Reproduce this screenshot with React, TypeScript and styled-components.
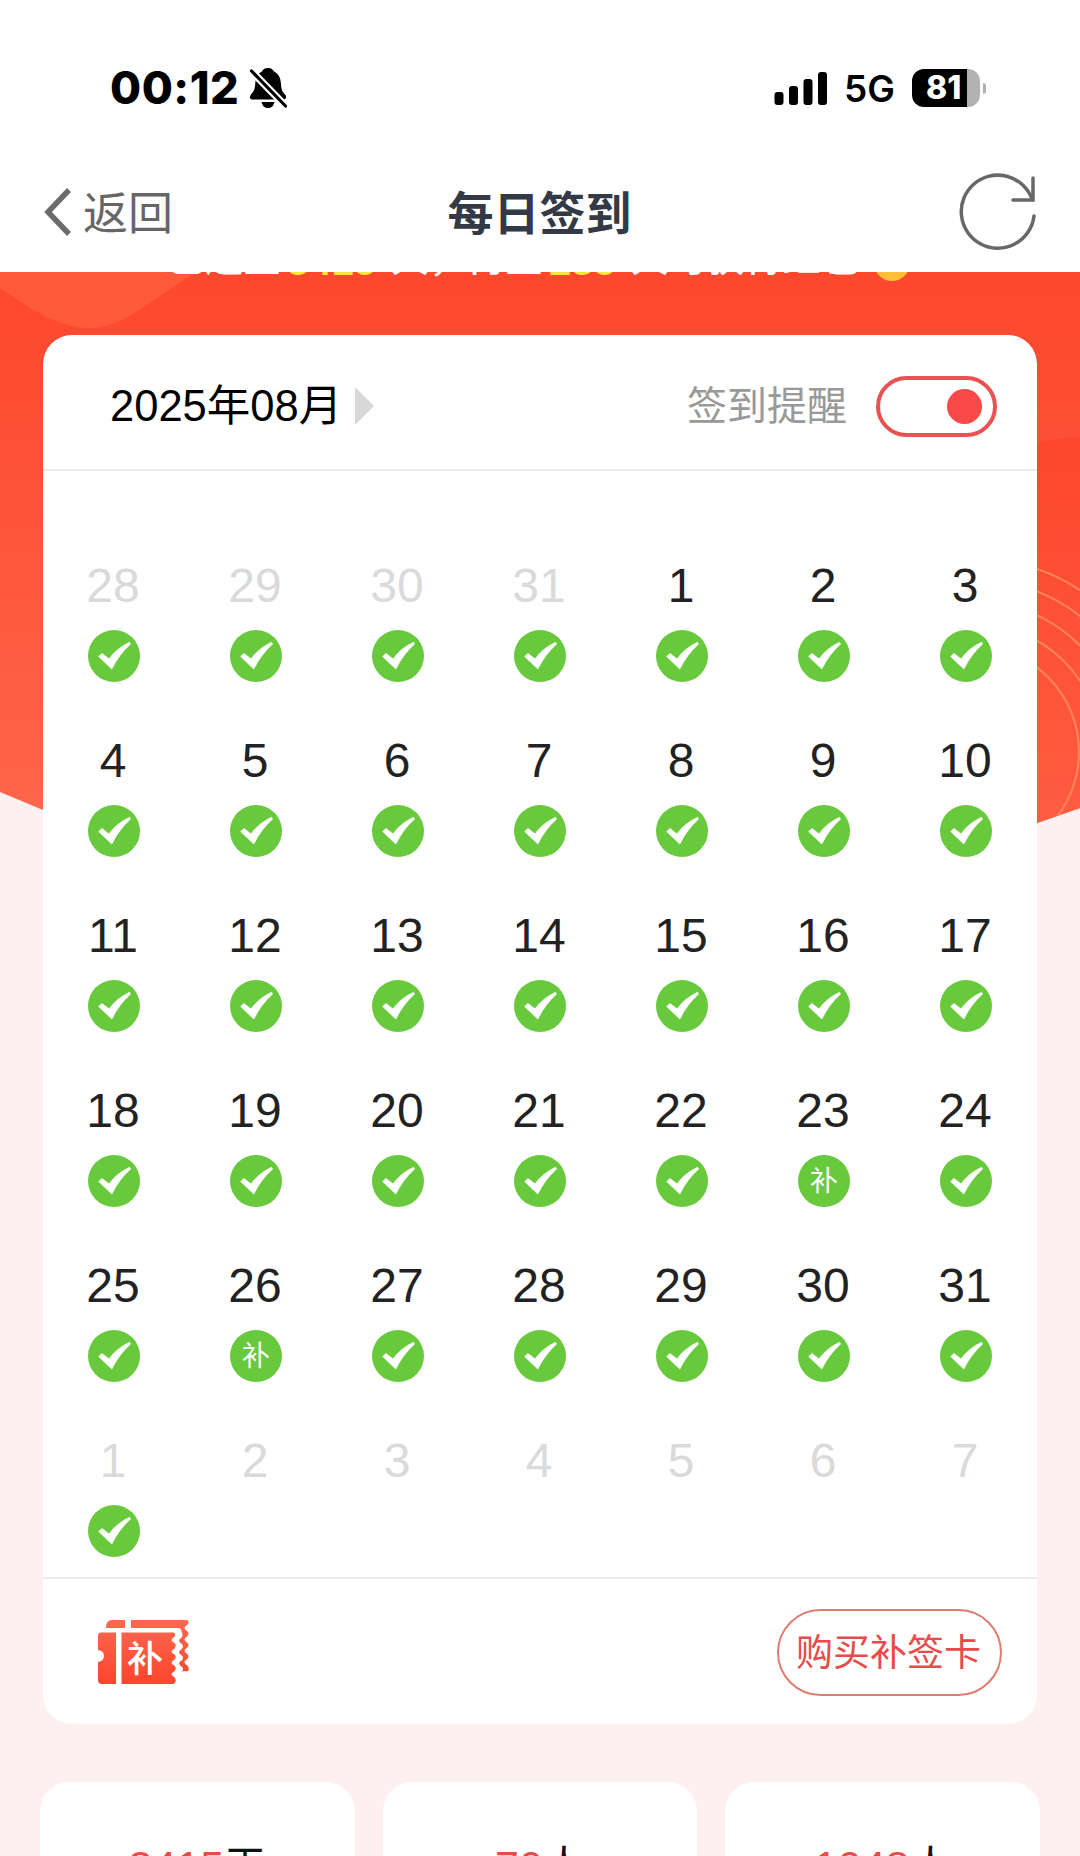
import React from "react";
import styled, { createGlobalStyle } from "styled-components";

const GlobalStyle = createGlobalStyle`
  * { box-sizing: border-box; }
  body { margin: 0; background: #feeff0; }
`;

const latin = `"Liberation Sans", "Noto Sans CJK SC", sans-serif`;
const cjk = `"Noto Sans CJK SC", sans-serif`;

const Screen = styled.div`
  width: 1080px;
  height: 1856px;
  overflow: hidden;
  display: flex;
  flex-direction: column;
  position: relative;
  isolation: isolate;
  font-family: ${latin};
  background: #feeff0;
`;

const StatusBar = styled.header`
  height: 140px;
  flex: none;
  padding: 40px 94px 4px 110px;
  display: flex;
  align-items: flex-start;
  justify-content: space-between;
  background: #fff;
  font-family: Inter, sans-serif;
  color: #000;
`;

const StatusGroup = styled.div<{ $gap: number }>`
  height: 96px;
  display: flex;
  align-items: center;
  gap: ${(p) => p.$gap}px;
`;

const Clock = styled.span`
  font-size: 45px;
  line-height: 54px;
  font-weight: 800;
  letter-spacing: 0.5px;
`;

const Network = styled.span`
  font-size: 37px;
  line-height: 44px;
  font-weight: 600;
  padding-top: 2px;
`;

const Battery = styled.div`
  display: flex;
  align-items: center;
  gap: 3px;
`;

const BatteryCell = styled.div`
  width: 68px;
  height: 38px;
  border-radius: 12px;
  background: linear-gradient(to right, #000 55px, #b2b2b2 55px);
  color: #fff;
  font-size: 32px;
  line-height: 38px;
  font-weight: 800;
  padding-left: 14px;
`;

const BatteryTip = styled.div`
  width: 3px;
  height: 11px;
  border-radius: 0 6px 6px 0;
  background: #b2b2b2;
`;

const NavBar = styled.nav`
  height: 132px;
  flex: none;
  padding: 11px 43px 0 44px;
  display: grid;
  grid-template-columns: 1fr auto 1fr;
  align-items: center;
  background: #fff;
  font-family: ${cjk};
`;

const Back = styled.div`
  display: flex;
  align-items: center;
  gap: 11px;
  font-size: 45px;
  line-height: 64px;
  color: #666;
`;

const BackLabel = styled.span`
  margin-top: -1px;
`;

const Title = styled.h1`
  margin: -3px 2px 0 0;
  font-size: 46px;
  line-height: 64px;
  font-weight: 700;
  color: #333a46;
`;

const NavAction = styled.div`
  display: flex;
  justify-content: flex-end;
`;

const Backdrop = styled.svg`
  position: absolute;
  top: 272px;
  left: 0;
  z-index: -1;
`;

const Notice = styled.div`
  height: 63px;
  flex: none;
  padding-left: 167px;
  overflow: hidden;
  display: flex;
  align-items: flex-start;
`;

const NoticeText = styled.p`
  margin: -41px 0 0;
  height: 55px;
  display: flex;
  align-items: center;
  gap: 6px;
  white-space: nowrap;
  font-size: 38px;
  line-height: 55px;
  font-weight: 500;
  color: #fff;
`;

const NoticeNumber = styled.span`
  margin: 6px 9px 0 0;
  font-size: 40px;
  font-weight: 700;
  color: #fbe53a;
`;

const Coin = styled.span`
  width: 36px;
  height: 36px;
  margin: 9px 0 0 9px;
  flex: none;
  border-radius: 50%;
  background: #ffbe35;
  color: #f0692a;
  font-size: 28px;
  line-height: 36px;
  text-align: center;
`;

const CalendarCard = styled.section`
  width: 994px;
  height: 1389px;
  flex: none;
  margin: 0 43px;
  border-radius: 29px;
  background: #fff;
  display: flex;
  flex-direction: column;
`;

const CardHeader = styled.div`
  height: 136px;
  flex: none;
  padding: 8px 40px 0 67px;
  display: flex;
  align-items: center;
  justify-content: space-between;
  border-bottom: 2px solid #ececec;
`;

const MonthPicker = styled.div`
  display: flex;
  align-items: center;
  gap: 13px;
  font-size: 43.5px;
  line-height: 60px;
  color: #000;
`;

const Reminder = styled.div`
  display: flex;
  align-items: center;
  gap: 29px;
  font-size: 40px;
  line-height: 60px;
  color: #999;
`;

const Toggle = styled.div`
  width: 121px;
  height: 61px;
  padding: 0 11px;
  display: flex;
  align-items: center;
  justify-content: flex-end;
  border: 4px solid #ec5152;
  border-radius: 31px;
`;

const Knob = styled.div`
  width: 35px;
  height: 35px;
  border-radius: 50%;
  background: #fb4949;
`;

const Days = styled.div`
  padding-top: 56px;
  display: grid;
  grid-template-columns: repeat(7, 142px);
  grid-auto-rows: 175px;
`;

const Day = styled.div`
  padding: 31px 0 20px;
  display: flex;
  flex-direction: column;
  align-items: center;
  gap: 16px;
`;

const DayNumber = styled.span<{ $muted: boolean }>`
  margin-right: 2px;
  font-size: 48px;
  line-height: 56px;
  color: ${(p) => (p.$muted ? "#dadada" : "#222")};
`;

const Mark = styled.div`
  width: 52px;
  height: 52px;
  display: flex;
  align-items: center;
  justify-content: center;
  border-radius: 50%;
  background: #67c93b;
  color: #fff;
  font-family: ${cjk};
  font-size: 28px;
  line-height: 52px;
`;

const MakeupLabel = styled.span`
  margin-top: -4px;
`;

const CardFooter = styled.div`
  flex: 1;
  padding: 0 35px 0 55px;
  display: flex;
  align-items: center;
  justify-content: space-between;
  border-top: 2px solid #ececec;
`;

const BuyButton = styled.button`
  width: 225px;
  height: 87px;
  margin-top: 1px;
  padding: 0 2px 5px 0;
  border: 2px solid #e07c70;
  border-radius: 44px;
  background: #fff;
  color: #e94b4b;
  font-family: ${cjk};
  font-size: 37px;
  line-height: 54px;
`;

const Stats = styled.section`
  margin: 58px 40px 0;
  display: grid;
  grid-template-columns: repeat(3, 1fr);
  gap: 28px;
`;

const StatCard = styled.div`
  height: 220px;
  padding-top: 54px;
  border-radius: 29px;
  background: #fff;
  text-align: center;
  font-size: 42px;
  line-height: 60px;
  color: #111;
`;

const StatValue = styled.span`
  font-size: 43px;
  color: #e94b4b;
`;

const BellOff = () => (
  <svg width="38" height="42" viewBox="0 0 38 42">
    <path
      d="M19 1C23 1 24.500 3.500 25 4.500C30 7 31.500 11 32 17C32.300 23 33.500 25 36.500 28C37.500 30 37 32.500 35 32.500H3C.5 32.500 .5 29.500 2 27.500C5 24 6 22 6.300 16C6.700 10 9 6.500 13 4.500C14 2 16 1 19 1Z"
      fill="#000"
    />
    <path d="M12.500 35H25.500C24.500 39.500 22 41 19 41S13.500 39.500 12.500 35Z" fill="#000" />
    <path d="M2.500 4L36.500 39" stroke="#fff" strokeWidth="7.500" />
    <path d="M2.500 4L36.500 39" stroke="#000" strokeWidth="3.200" strokeLinecap="round" />
  </svg>
);

const Signal = () => (
  <svg width="53" height="34" viewBox="0 0 53 34">
    <rect x="0.500" y="21" width="9" height="13" rx="3" />
    <rect x="15" y="15" width="9" height="19" rx="3" />
    <rect x="29.500" y="8" width="9" height="26" rx="3" />
    <rect x="44" y="1" width="9" height="33" rx="3" />
  </svg>
);

const Chevron = () => (
  <svg width="28" height="48" viewBox="0 0 28 48" fill="none" stroke="#6b6b6b" strokeWidth="5.500">
    <path d="M25 2L4 24L25 46" />
  </svg>
);

const Refresh = () => (
  <svg width="78" height="80" viewBox="0 0 78 80" fill="none" stroke="#686868" strokeWidth="3.500" strokeLinecap="round">
    <path d="M75 44A36.500 36.500 0 1 1 73 27" />
    <path d="M74 6V28H54" />
  </svg>
);

const Check = () => (
  <svg width="52" height="52" viewBox="0 0 52 52">
    <path
      d="M10.700 26.500L14 23.500L21 29Q28.500 18.500 41.500 12.300L42.500 14Q30.500 25 23.800 39Z"
      fill="#fff"
      stroke="#fff"
      strokeWidth="0.800"
      strokeLinejoin="round"
    />
  </svg>
);

const Triangle = () => (
  <svg width="20" height="38" viewBox="0 0 20 38">
    <path d="M0 0L19 19L0 38Z" fill="#d8d8d8" />
  </svg>
);

const TicketWrap = styled.div`
  width: 92px;
  height: 66px;
  position: relative;
`;

const TicketLabel = styled.span`
  position: absolute;
  left: 29px;
  top: 16px;
  width: 36px;
  font-family: ${cjk};
  font-size: 36px;
  line-height: 42px;
  font-weight: 500;
  color: #fff;
`;

const Ticket = () => (
  <TicketWrap>
    <svg width="92" height="66" viewBox="0 0 92 66">
      <defs>
        <linearGradient id="ticket" x1="0" y1="0" x2="0" y2="66" gradientUnits="userSpaceOnUse">
          <stop offset="0" stopColor="#fb6a50" />
          <stop offset="1" stopColor="#fc452c" />
        </linearGradient>
      </defs>
      <g fill="url(#ticket)">
        <path d="M8 9Q8 1 14 1H27V9Z" />
        <path d="M33 1H88Q91 1 90.500 4L89 6q-5 3 0 6q3 2.700 0 5.400q-5 3 0 6q3 2.700 0 5.400q-5 3 0 6q3 2.700 0 5.400q-5 3 0 6q3 2.700 1 6H83.500V53q3-2.700 0-5.400q-5-3 0-6q3-2.700 0-5.400q-5-3 0-6q3-2.700 0-5.400q-5-3 0-6q2-3 0-6Q83.500 9 80 9H33Z" />
        <path d="M3 13.500H18V65H4Q0 65 0 61V43Q6 42 6 37Q6 32 0 31V17Q0 13.500 3 13.500Z" />
        <path d="M23.500 13.500H75Q78.500 13.500 76.500 18q-6 3 0 6q2.500 2.700 0 5.400q-6 3 0 6q2.500 2.700 0 5.400q-6 3 0 6q2.500 2.700 0 5.400q-6 3 0 6q3 3.500 -1 6.800H23.500Z" />
      </g>
    </svg>
    <TicketLabel>补</TicketLabel>
  </TicketWrap>
);

const rings = [106, 128.5, 151, 173, 194];

const Scenery = () => (
  <Backdrop width="1080" height="560" viewBox="0 272 1080 560">
    <defs>
      <linearGradient id="sky" x1="0" y1="272" x2="0" y2="820" gradientUnits="userSpaceOnUse">
        <stop offset="0" stopColor="#fd482e" />
        <stop offset="0.15" stopColor="#fd4b31" />
        <stop offset="1" stopColor="#ff6649" />
      </linearGradient>
      <linearGradient id="hill" x1="0" y1="437" x2="0" y2="820" gradientUnits="userSpaceOnUse">
        <stop offset="0" stopColor="#fd472e" />
        <stop offset="1" stopColor="#ff5c41" />
      </linearGradient>
      <clipPath id="banner">
        <path d="M0 272H1080V808L1037 823L540 960L43 810L0 792Z" />
      </clipPath>
    </defs>
    <g clipPath="url(#banner)">
      <rect y="272" width="1080" height="560" fill="url(#sky)" />
      <path d="M0 288C35 312 60 328 90 328C125 328 155 296 197 272H0Z" fill="#ff5a3b" />
      <path d="M1000 460Q1040 436 1080 437V832H1000Z" fill="url(#hill)" />
      {rings.map((r) => (
        <circle key={r} cx="973" cy="752" r={r} fill="none" stroke="#ff8557" strokeWidth="2" />
      ))}
    </g>
  </Backdrop>
);

type Status = "check" | "makeup" | "none";
interface DayInfo {
  n: number;
  muted: boolean;
  status: Status;
}

const days: DayInfo[] = [
  ...[28, 29, 30, 31].map((n): DayInfo => ({ n, muted: true, status: "check" })),
  ...Array.from({ length: 31 }, (_, i): DayInfo => ({
    n: i + 1,
    muted: false,
    status: i + 1 === 23 || i + 1 === 26 ? "makeup" : "check",
  })),
  ...Array.from({ length: 7 }, (_, i): DayInfo => ({
    n: i + 1,
    muted: true,
    status: i === 0 ? "check" : "none",
  })),
];

const stats = [
  { value: "3415", unit: "天" },
  { value: "70", unit: "人" },
  { value: "1048", unit: "人" },
];

export default function App() {
  return (
    <Screen>
      <GlobalStyle />
      <Scenery />
      <StatusBar>
        <StatusGroup $gap={10}>
          <Clock>00:12</Clock>
          <BellOff />
        </StatusGroup>
        <StatusGroup $gap={17}>
          <Signal />
          <Network>5G</Network>
          <Battery>
            <BatteryCell>81</BatteryCell>
            <BatteryTip />
          </Battery>
        </StatusGroup>
      </StatusBar>
      <NavBar>
        <Back>
          <Chevron />
          <BackLabel>返回</BackLabel>
        </Back>
        <Title>每日签到</Title>
        <NavAction>
          <Refresh />
        </NavAction>
      </NavBar>
      <Notice>
        <NoticeText>
          <span>已连签</span>
          <NoticeNumber>3415</NoticeNumber>
          <span>天，再签</span>
          <NoticeNumber>235</NoticeNumber>
          <span>天可获得红包</span>
          <Coin>¥</Coin>
        </NoticeText>
      </Notice>
      <CalendarCard>
        <CardHeader>
          <MonthPicker>
            2025年08月
            <Triangle />
          </MonthPicker>
          <Reminder>
            签到提醒
            <Toggle>
              <Knob />
            </Toggle>
          </Reminder>
        </CardHeader>
        <Days>
          {days.map((d, i) => (
            <Day key={i}>
              <DayNumber $muted={d.muted}>{d.n}</DayNumber>
              {d.status !== "none" && (
                <Mark>{d.status === "check" ? <Check /> : <MakeupLabel>补</MakeupLabel>}</Mark>
              )}
            </Day>
          ))}
        </Days>
        <CardFooter>
          <Ticket />
          <BuyButton>购买补签卡</BuyButton>
        </CardFooter>
      </CalendarCard>
      <Stats>
        {stats.map((s) => (
          <StatCard key={s.value}>
            <StatValue>{s.value}</StatValue>
            {s.unit}
          </StatCard>
        ))}
      </Stats>
    </Screen>
  );
}
